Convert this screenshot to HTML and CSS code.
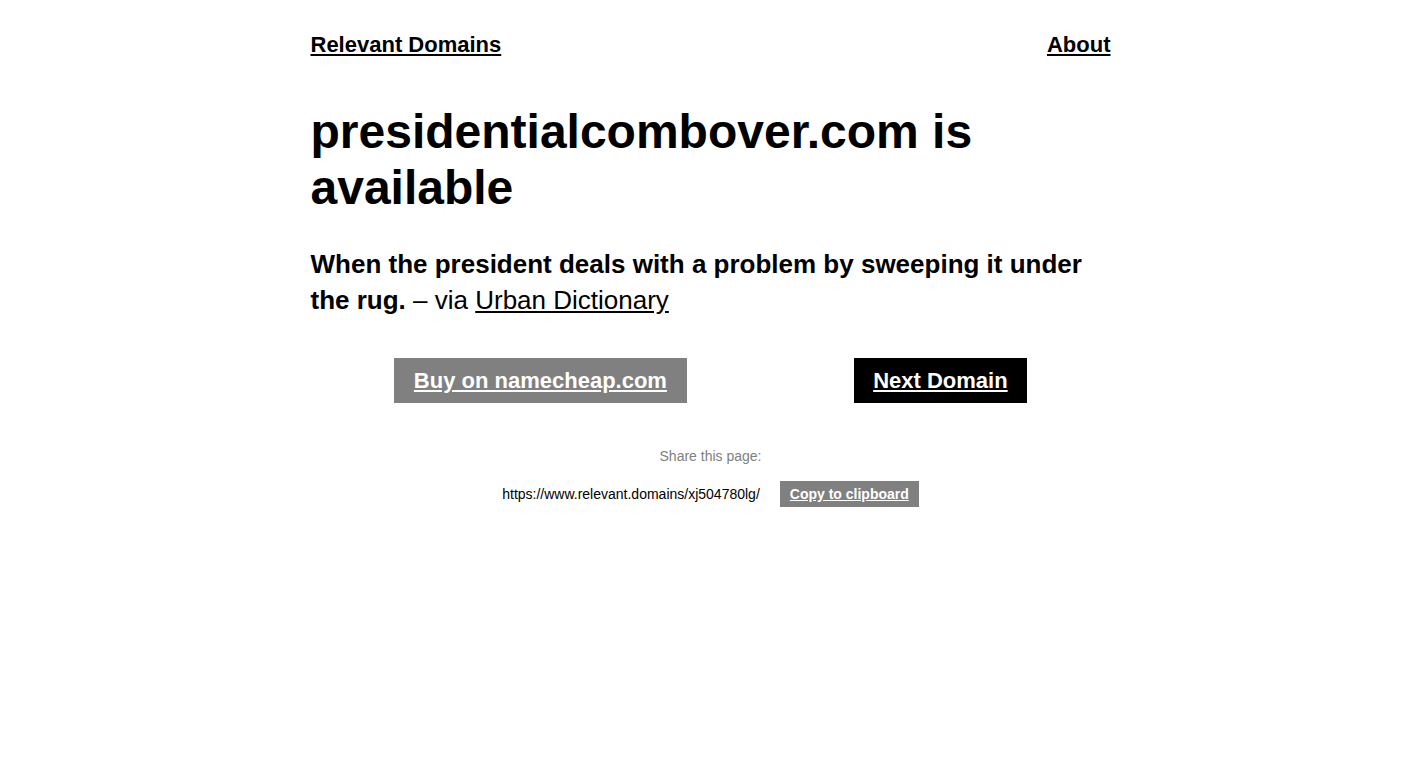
FILE: index.html
```html
<!DOCTYPE html>
<html>
<head>
<meta charset="utf-8">
<link rel="stylesheet" href="styles.css">
</head>
<body>
<div class="page">
  <header class="nav">
    <a href="#" class="nav-link">Relevant Domains</a>
    <a href="#" class="nav-link">About</a>
  </header>
  <h1 class="title">presidentialcombover.com is available</h1>
  <p class="desc"><strong>When the president deals with a problem by sweeping it under the rug.</strong> – via <a href="#">Urban Dictionary</a></p>
  <div class="actions">
    <a href="#" class="btn btn-gray">Buy on namecheap.com</a>
    <a href="#" class="btn btn-black">Next Domain</a>
  </div>
  <div class="share">
    <div class="share-label">Share this page:</div>
    <div class="share-row">
      <span class="share-url">https://www.relevant.domains/xj504780lg/</span>
      <a href="#" class="copy">Copy to clipboard</a>
    </div>
  </div>
</div>
</body>
</html>
```
FILE: styles.css
```css
html, body {
  margin: 0;
  padding: 0;
  background: #fff;
}
body {
  font-family: "Liberation Sans", Arial, sans-serif;
  color: #000;
}
a { color: #000; }
.page {
  width: 800px;
  margin: 0 auto;
  padding: 30px 2px 0 0;
}
.nav {
  display: flex;
  justify-content: space-between;
  align-items: baseline;
}
.nav-link {
  font-size: 22px;
  font-weight: bold;
  line-height: 30px;
}
.title {
  font-size: 48px;
  line-height: 56px;
  font-weight: bold;
  margin: 44px 0 0 0;
}
.desc {
  font-size: 26px;
  line-height: 36px;
  margin: 30px 0 0 0;
}
.actions {
  display: flex;
  justify-content: space-around;
  margin-top: 40px;
}
.btn {
  display: block;
  font-size: 22px;
  font-weight: bold;
  color: #fff;
  padding: 9px 20px;
  line-height: 27px;
}
.btn-gray { background: #808080; }
.btn-black { background: #000; padding: 9px 19.5px; }
.share {
  margin-top: 43px;
  text-align: center;
}
.share-label {
  color: #808080;
  font-size: 14px;
  line-height: 20px;
}
.share-row {
  display: flex;
  justify-content: center;
  align-items: center;
  gap: 20px;
  margin-top: 15px;
}
.share-url {
  font-size: 14px;
}
.copy {
  background: #808080;
  color: #fff;
  font-size: 14px;
  font-weight: bold;
  padding: 5px 10px;
  line-height: 16px;
}
```
